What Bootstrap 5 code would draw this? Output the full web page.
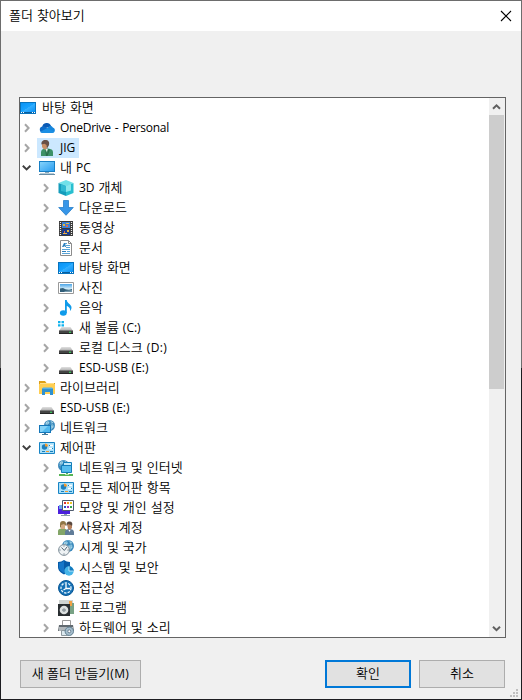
<!DOCTYPE html>
<html lang="ko">
<head>
<meta charset="utf-8">
<meta name="viewport" content="width=device-width, initial-scale=1">
<title>폴더 찾아보기</title>
<link href="https://cdn.jsdelivr.net/npm/bootstrap@5.3.0/dist/css/bootstrap.min.css" rel="stylesheet">
<style>
body{background:#f0f0f0;color:#000;font:350 13px/20px "Open Sans","Noto Sans CJK KR",sans-serif;word-spacing:.6px;overflow:hidden}
.dialog{width:522px;height:700px;background:#f0f0f0;border:1px solid;border-image:linear-gradient(#6d6d6d 0 368px,#1c1c20 368px) 1}
.titlebar{height:30px;padding:0 9px 0 8px}
.titlebar span{padding-bottom:2px}
.close-x{width:12px;height:12px}
.tree-box{height:541px;margin:66px 15px 0 18px;border:1px solid #646464;background:#fff}
.tree-row{height:20px;white-space:nowrap}
.ico{width:16px;height:16px;flex:none}
.lv2{padding-left:19px}
.exp{width:15px;height:16px;flex:none;margin-right:4px}
.lbl{padding-left:5px;height:20px;line-height:18px}
.lbl.en{line-height:20px}
.lv0 .lbl{padding-left:6px}
.en{font-size:12px;font-weight:400}
.tight{letter-spacing:-.25px;word-spacing:1px}
.loose{letter-spacing:.35px}
.picked{background:#cce8ff;margin-left:-2px;padding:0 4px 0 2px}
.scroll-bar{width:16px;background:#f0f0f0;padding-right:1px}
.scroll-bar svg{width:15px;height:17px}
.thumb{height:274px;background:#cdcdcd}
.foot{padding:22px 16px 0 19px}
.dlg-btn{height:28px;border:1px solid #adadad;border-radius:0;background:#e1e1e1;color:#000;font-size:13px;font-weight:350;line-height:24px;padding:0 0 2px;width:86px}
.dlg-btn.wide{width:121px}
.dlg-btn.default{border:2px solid #0078d7;line-height:22px}
.grip{width:8px;height:8px;right:3px;bottom:2px}
</style>
</head>
<body>
<svg class="position-absolute" width="0" height="0" aria-hidden="true">
<defs>
<linearGradient id="gBlue" x2="1" y2="1"><stop stop-color="#0a93f5"/><stop offset=".5" stop-color="#18a3ff"/><stop offset=".52" stop-color="#35b0ff"/><stop offset="1" stop-color="#0b90f5"/></linearGradient>
<linearGradient id="gPc" x2="1" y2="1"><stop stop-color="#86d3fb"/><stop offset="1" stop-color="#2a9df0"/></linearGradient>
<linearGradient id="gSky" x2="0" y2="1"><stop stop-color="#4aa5e8"/><stop offset=".6" stop-color="#d3ecf8"/><stop offset="1" stop-color="#3f7277"/></linearGradient>
<linearGradient id="gDisk" x2="0" y2="1"><stop stop-color="#e0e0e0"/><stop offset="1" stop-color="#aaa"/></linearGradient>
<symbol id="right" viewBox="0 0 15 16"><path d="M5 4.200 8.600 8 5 11.800" fill="none" stroke="#a6a6a6" stroke-width="2"/></symbol>
<symbol id="down" viewBox="0 0 15 16"><path d="M2.800 5.700 6.600 9.400 10.400 5.700" fill="none" stroke="#404040" stroke-width="1.900"/></symbol>
<symbol id="desktop" viewBox="0 0 16 16"><path fill="#0873bd" d="M0 2h16v12H0z"/><path fill="url(#gBlue)" d="M1 3h14v9H1z"/><path fill="#075d9d" d="M1 12h14v1H1z"/><path stroke="#fff" d="M1 12.500h1M3 12.500h1M12 12.500h1M14 12.500h1"/></symbol>
<symbol id="cloud" viewBox="0 0 16 16"><path fill="#0a5ab5" d="M3.300 7.200A4.500 4.500 0 0 1 12 5.800c0 1.800-8.700 3-8.700 1.400z"/><path fill="#0f6cc8" d="M3.200 6.500c2-.7 4.100 1 8.800 4L4 12.800A3.200 3.200 0 0 1 3.200 6.500z"/><path fill="#1686dc" d="M8.500 8C10 5.200 13.200 5.500 13.800 7.500 16 8 16.500 11 15 12.200L8.500 10z"/><path fill="#1b8fe4" d="m8.200 8 7.300 3.800c-.5.800-1.200 1.200-2 1.200H3.700c-1 0-1.900-.4-2.600-1.100z"/></symbol>
<symbol id="person" viewBox="0 0 16 16"><path fill="#3d9168" d="M2 16v-4C2.200 9.600 4 9 6 8.500h3c3.200.4 4.800 1.200 5 3.500v4z"/><path fill="#2c6c4d" d="m6 9 2 5 1.500-5 1.500.5L8.500 16H7z"/><path fill="#eee" d="m6.500 9 1.300 3 1-3z"/><path fill="#c99068" d="M3 3h5v3.500c0 2-.8 3-2 3s-3-1.500-3-3z"/><path fill="#685047" d="M2.500 4.500C2 1.500 4 0 6 0c3.500 0 5 2 3.800 5.500L8 8.500 7.500 5l-2-1.200z"/></symbol>
<symbol id="pc" viewBox="0 0 16 16"><path fill="#177fc5" d="M0 1h16v11H0z"/><path fill="url(#gPc)" d="M1 2h14v9H1z"/><path fill="#86a8bd" d="M6 12h4v2H6z"/><path fill="#688da5" d="M0 14h16v1H0z"/><path fill="#b8ccd7" d="M1 13h14v1H1z"/></symbol>
<symbol id="cube" viewBox="0 0 16 16"><path fill="#70e1e9" d="m8 0 7.500 3L8 6 .5 3z"/><path fill="#159cbb" d="m.5 3 7.500 3v10L.5 13z"/><path fill="#28bfd0" d="m8 6 7.500-3v10L8 16z"/><path fill="#8be8ee" d="m8 6 5-2v6.500L8 12z"/><path fill="#2fb9d2" d="m3 4 5 2v6l-5-1z"/></symbol>
<symbol id="download" viewBox="0 0 16 16"><path fill="#3796e8" stroke="#1875c4" stroke-width=".7" d="M5.500.5h5v7h4.800L8 15.300.7 7.500h4.800z"/></symbol>
<symbol id="film" viewBox="0 0 16 16"><path fill="#3b3b3b" d="M1 1h14v15H1z"/><path stroke="#eee" stroke-dasharray="1 1" stroke-width="1.200" d="M2.500 2v14M13.500 2v14"/><path fill="#3a7ed6" d="M4 2h8v6H4z"/><path fill="#193d91" d="M4 9h8v6H4z"/><path fill="#e8b63d" d="M5 4h2v2H5zM8 3h3v1H8zM5 13h4v1H5zM9 10h2v2H9z"/><path fill="#d76a55" d="M8 5h2v2H8zM6 11h1v2H6z"/></symbol>
<symbol id="doc" viewBox="0 0 16 16"><path fill="#fff" stroke="#8c8c8c" d="M2.500.5h8l3 3v12h-11z"/><path fill="none" stroke="#8c8c8c" d="M10.500.5v3h3"/><path stroke="#5aa5d8" d="M6 3.500h3M8 5.500h4M8 7.500h4M4 9.500h8M9 11.500h3M4 13.500h8"/><path fill="#2c7fbd" d="M4 7 6 3h1l1 4H7l-.5-1L5.500 7zM4 11h4v1H4z"/></symbol>
<symbol id="photo" viewBox="0 0 16 16"><path fill="#fff" stroke="#999" d="M.5 2.500h15v11H.5z"/><path fill="url(#gSky)" d="M2 4h12v8H2z"/><path fill="#315e78" d="M2 8.500 5 8l3 1.500 3 .5 3-1v3H2z"/><path fill="#7599ac" d="m7 11 7-1v2H6z"/></symbol>
<symbol id="music" viewBox="0 0 16 16"><ellipse cx="5.300" cy="13" rx="3.400" ry="2.700" fill="#109bea"/><path fill="#109bea" d="M7 0h1.800c0 3.300 4.700 4.200 4.700 7.500 0 1.300-.5 2.500-1.500 3.500.5-3-1.200-4.200-3.200-5v7H7z"/></symbol>
<symbol id="disk" viewBox="0 0 16 16"><path fill="url(#gDisk)" d="M3.500 6h9L15 10H1z"/><path fill="#444" d="M1 9.500h14V13H1z"/><path fill="#252525" d="M1 12h14v1H1z"/><path fill="#3bed65" d="M11 10.800h2v1h-2z"/></symbol>
<symbol id="sysdisk" viewBox="0 0 16 16"><use href="#disk" y="1" width="16" height="16"/><path fill="#fff" d="M0 0h7v7H0z"/><path fill="#12b4ee" d="M0 1h2.500v2.300H0zM3.500 1H6v2.300H3.500zM0 4.300h2.500v2.200H0zM3.500 4.300H6v2.200H3.500z"/></symbol>
<symbol id="library" viewBox="0 0 16 16"><path fill="#dda018" d="M0 1h6l1.500 2H16v4H0z"/><path fill="#ffce52" d="M0 4h16v10H0z"/><path fill="#ffdf87" d="M1 3h14v1H1z"/><path fill="#2f91d0" d="M3 8.500h11V15h-3v-3H6v3H3z"/><path fill="#53b0e8" d="M4 7.500h9L14 9H3z"/></symbol>
<symbol id="globe" viewBox="0 0 16 16"><circle cx="8" cy="8" r="8" fill="#3b88bb"/><path fill="#a8d4e7" d="m3 3 3-1.500L8 4 5 7 2 6zM8 8l5-2 1 4-4 4-2-3zM10 1l4 3-3 1z"/><path fill="none" stroke="#68aed1" d="M1 8h14M8 0C3 5 3 11 8 16M8 0c5 5 5 11 0 16"/></symbol>
<symbol id="network" viewBox="0 0 16 16"><use href="#globe" x="5" y="0" width="11" height="11"/><path fill="#1476b9" d="M0 5h12v8H0z"/><path fill="#50b9ef" d="M1 6h10v6H1z"/><path fill="#84d2f7" d="M1 6h8l-6 6H1z"/><path fill="#437b9c" d="M5 13h2v1h2v1H3v-1h2z"/></symbol>
<symbol id="control" viewBox="0 0 16 16"><path fill="#a9dff8" stroke="#1784c5" d="M.5 2.500h15v11H.5z"/><circle cx="5.500" cy="7" r="2.700" fill="#1d80be"/><path fill="#f39a2d" d="M6 6.500v-3a3 3 0 0 1 3 3zM7 11h3v1H7z"/><path stroke="#fff" stroke-width="1.500" d="M10 5.500h4M10 8.500h4"/><path stroke="#187fbd" d="M10 5.500h1M13 8.500h1M3 11.500h3M11 11.500h3"/></symbol>
<symbol id="internet" viewBox="0 0 16 16"><use href="#globe" width="11" height="11"/><path fill="#bfe8fa" stroke="#137eb8" d="M5.500 2.500h8v6h-8z"/><path fill="#56bdee" stroke="#147dba" d="M3.500 5.500h10v7h-10z"/><path fill="#55b554" d="M1 14h14v2H1zM8 13h2v2H8z"/><path fill="#b6dfb5" d="M7 14h4v1H7z"/></symbol>
<symbol id="looks" viewBox="0 0 16 16"><path fill="#4b20dc" d="M0 6h12v8H0z"/><path fill="#69a7eb" d="M1 5h5v4H1z"/><path fill="#fff" stroke="#505c6e" d="M4.500.5h11v10h-11z"/><path fill="#d33" d="M6 2h2v2H6z"/><path fill="#ff9b22" d="M9 2h2v2H9z"/><path fill="#ecc82a" d="M12 2h2v2h-2z"/><path fill="#2754c9" d="M6 6h2v2H6z"/><path fill="#9b33b7" d="M9 6h2v2H9z"/><path fill="#35a653" d="M12 6h2v2h-2z"/><path fill="#8a9baa" d="M6 14h3v1h3v1H3v-1h3z"/></symbol>
<symbol id="users" viewBox="0 0 16 16"><path fill="#83a568" d="M0 15v-4c0-2 2-2.500 5-2.500s4 1 4 3V15z"/><path fill="#d4ab83" d="M3 4h4v5H3z"/><path fill="#8f7544" d="M2 7V4c0-2 1-3 3-3s3 1 3 3v2L6 4 3 5v3z"/><path fill="#607c98" d="M7 15v-3c0-2 2-3 4.500-3s4.500 1 4.500 3v3z"/><path fill="#b37f5c" d="M9 4h5v4l-2 2-2-1z"/><path fill="#58483e" d="M8.500 6C8 3 9 1.500 11.500 1.500S15 3 14 6l-1-1-3-1z"/><path fill="#fff" d="m10.500 10 1 2 1-2z"/></symbol>
<symbol id="clock" viewBox="0 0 16 16"><use href="#globe" x="4" width="12" height="12"/><circle cx="6" cy="10" r="5.400" fill="#eef2f4" stroke="#81909a"/><path fill="none" stroke="#526573" d="m3.500 7.500 2.800 3L9 7M6 5.500v1M6 13.500v1M1.500 10h1M9.500 10h1"/></symbol>
<symbol id="shield" viewBox="0 0 16 16"><path fill="#075ba8" d="M0 2c2.500 0 4.200-.8 6-2 1.800 1.200 3.500 2 6 2v5c0 3.500-2.500 5.500-6 7.500C2.500 12.500 0 10.500 0 7z"/><path fill="#1676c8" d="M6 1v12C2.500 11 1 9.500 1 7V3c1.800 0 3.500-.8 5-2z"/><circle cx="11" cy="11" r="4.700" fill="#45b4e8"/><path fill="#147abd" d="M11 11V6.300A4.700 4.700 0 0 1 15.700 11z"/><path fill="none" stroke="#d3f3ff" stroke-width=".8" d="M11 6.500V11h4.500"/></symbol>
<symbol id="access" viewBox="0 0 16 16"><circle cx="8" cy="8" r="7.500" fill="#1470b5" stroke="#0a5795"/><circle cx="8" cy="8" r="5" fill="none" stroke="#e9f7ff" stroke-width="1.300" stroke-dasharray="2.400 1.200"/><path fill="none" stroke="#fff" stroke-width="1.300" d="M8 4v4.500h4M8 8.500 5.500 10"/></symbol>
<symbol id="program" viewBox="0 0 16 16"><path fill="#cfd4d2" d="M1 0h14v14H1z"/><path fill="#78a284" d="M12 3h4v11h-4z"/><path fill="#f0a145" d="M11 1h3v5h-3z"/><path fill="#292e31" d="M0 4h12v12H0z"/><circle cx="6" cy="10" r="4.300" fill="#dce0e0"/><circle cx="6" cy="10" r="1.600" fill="#56646c"/><circle cx="6" cy="10" r=".7" fill="#fff"/></symbol>
<symbol id="hardware" viewBox="0 0 16 16"><path fill="#fff" stroke="#9a9a9a" d="M4.500.5h8v6h-8z"/><path fill="#626a70" d="M1 5h14l1 6H0z"/><path fill="#b1b7bb" d="M1 7h14v4H1z"/><path fill="#dce9ef" stroke="#8e999f" d="M3.500 10.500h6v5h-6z"/><circle cx="11.300" cy="11.300" r="4.200" fill="#a5bdcc" stroke="#617f92"/><circle cx="11.300" cy="11.300" r="1.500" fill="#fff" stroke="#687f91"/></symbol>
</defs>
</svg>

<main class="dialog position-relative">
<header class="titlebar bg-white d-flex align-items-center justify-content-between"><span>폴더 찾아보기</span>
<svg class="close-x" viewBox="0 0 12 12" role="img" aria-label="닫기"><path d="m1 1 10 10M11 1 1 11" stroke="#000" stroke-width="1.100"/></svg></header>
<section class="tree-box d-flex">
<div class="flex-grow-1 overflow-hidden" role="tree">
<div class="tree-row lv0 d-flex align-items-center"><svg class="ico"><use href="#desktop"/></svg><span class="lbl">바탕 화면</span></div>
<div class="tree-row lv1 d-flex align-items-center"><svg class="exp"><use href="#right"/></svg><svg class="ico"><use href="#cloud"/></svg><span class="lbl en tight">OneDrive - Personal</span></div>
<div class="tree-row lv1 d-flex align-items-center"><svg class="exp"><use href="#right"/></svg><span class="picked d-flex align-items-center"><svg class="ico"><use href="#person"/></svg><span class="lbl en">JIG</span></span></div>
<div class="tree-row lv1 d-flex align-items-center"><svg class="exp"><use href="#down"/></svg><svg class="ico"><use href="#pc"/></svg><span class="lbl">내 <span class="en">PC</span></span></div>
<div class="tree-row lv2 d-flex align-items-center"><svg class="exp"><use href="#right"/></svg><svg class="ico"><use href="#cube"/></svg><span class="lbl"><span class="en">3D</span> 개체</span></div>
<div class="tree-row lv2 d-flex align-items-center"><svg class="exp"><use href="#right"/></svg><svg class="ico"><use href="#download"/></svg><span class="lbl">다운로드</span></div>
<div class="tree-row lv2 d-flex align-items-center"><svg class="exp"><use href="#right"/></svg><svg class="ico"><use href="#film"/></svg><span class="lbl">동영상</span></div>
<div class="tree-row lv2 d-flex align-items-center"><svg class="exp"><use href="#right"/></svg><svg class="ico"><use href="#doc"/></svg><span class="lbl">문서</span></div>
<div class="tree-row lv2 d-flex align-items-center"><svg class="exp"><use href="#right"/></svg><svg class="ico"><use href="#desktop"/></svg><span class="lbl">바탕 화면</span></div>
<div class="tree-row lv2 d-flex align-items-center"><svg class="exp"><use href="#right"/></svg><svg class="ico"><use href="#photo"/></svg><span class="lbl">사진</span></div>
<div class="tree-row lv2 d-flex align-items-center"><svg class="exp"><use href="#right"/></svg><svg class="ico"><use href="#music"/></svg><span class="lbl">음악</span></div>
<div class="tree-row lv2 d-flex align-items-center"><svg class="exp"><use href="#right"/></svg><svg class="ico"><use href="#sysdisk"/></svg><span class="lbl">새 볼륨 <span class="en">(C:)</span></span></div>
<div class="tree-row lv2 d-flex align-items-center"><svg class="exp"><use href="#right"/></svg><svg class="ico overflow-visible"><use href="#disk" y="1" width="16" height="16"/></svg><span class="lbl">로컬 디스크 <span class="en loose">(D:)</span></span></div>
<div class="tree-row lv2 d-flex align-items-center"><svg class="exp"><use href="#right"/></svg><svg class="ico overflow-visible"><use href="#disk" y="1" width="16" height="16"/></svg><span class="lbl en">ESD-USB (E:)</span></div>
<div class="tree-row lv1 d-flex align-items-center"><svg class="exp"><use href="#right"/></svg><svg class="ico"><use href="#library"/></svg><span class="lbl">라이브러리</span></div>
<div class="tree-row lv1 d-flex align-items-center"><svg class="exp"><use href="#right"/></svg><svg class="ico overflow-visible"><use href="#disk" y="1" width="16" height="16"/></svg><span class="lbl en">ESD-USB (E:)</span></div>
<div class="tree-row lv1 d-flex align-items-center"><svg class="exp"><use href="#right"/></svg><svg class="ico"><use href="#network"/></svg><span class="lbl">네트워크</span></div>
<div class="tree-row lv1 d-flex align-items-center"><svg class="exp"><use href="#down"/></svg><svg class="ico"><use href="#control"/></svg><span class="lbl">제어판</span></div>
<div class="tree-row lv2 d-flex align-items-center"><svg class="exp"><use href="#right"/></svg><svg class="ico"><use href="#internet"/></svg><span class="lbl">네트워크 및 인터넷</span></div>
<div class="tree-row lv2 d-flex align-items-center"><svg class="exp"><use href="#right"/></svg><svg class="ico"><use href="#control"/></svg><span class="lbl">모든 제어판 항목</span></div>
<div class="tree-row lv2 d-flex align-items-center"><svg class="exp"><use href="#right"/></svg><svg class="ico"><use href="#looks"/></svg><span class="lbl">모양 및 개인 설정</span></div>
<div class="tree-row lv2 d-flex align-items-center"><svg class="exp"><use href="#right"/></svg><svg class="ico"><use href="#users"/></svg><span class="lbl">사용자 계정</span></div>
<div class="tree-row lv2 d-flex align-items-center"><svg class="exp"><use href="#right"/></svg><svg class="ico"><use href="#clock"/></svg><span class="lbl">시계 및 국가</span></div>
<div class="tree-row lv2 d-flex align-items-center"><svg class="exp"><use href="#right"/></svg><svg class="ico"><use href="#shield"/></svg><span class="lbl">시스템 및 보안</span></div>
<div class="tree-row lv2 d-flex align-items-center"><svg class="exp"><use href="#right"/></svg><svg class="ico"><use href="#access"/></svg><span class="lbl">접근성</span></div>
<div class="tree-row lv2 d-flex align-items-center"><svg class="exp"><use href="#right"/></svg><svg class="ico"><use href="#program"/></svg><span class="lbl">프로그램</span></div>
<div class="tree-row lv2 d-flex align-items-center"><svg class="exp"><use href="#right"/></svg><svg class="ico"><use href="#hardware"/></svg><span class="lbl">하드웨어 및 소리</span></div>
</div>
<div class="scroll-bar d-flex flex-column"><svg viewBox="0 0 15 17"><path d="M4 10.800 7.500 7.300 11 10.800" fill="none" stroke="#606060" stroke-width="2"/></svg><div class="thumb"></div><svg class="mt-auto" viewBox="0 0 15 17"><path d="M4 6.700 7.500 10.200 11 6.700" fill="none" stroke="#606060" stroke-width="2"/></svg></div>
</section>
<footer class="foot d-flex gap-2"><button class="btn dlg-btn wide me-auto">새 폴더 만들기<span class="en loose">(M)</span></button><button class="btn dlg-btn default">확인</button><button class="btn dlg-btn">취소</button></footer>
<svg class="grip position-absolute" viewBox="0 0 8 8" aria-hidden="true"><path fill="#bfbfbf" d="M6 0h2v2H6zM3 3h2v2H3zM6 3h2v2H6zM0 6h2v2H0zM3 6h2v2H3zM6 6h2v2H6z"/></svg>
</main>
<script src="https://cdn.jsdelivr.net/npm/bootstrap@5.3.0/dist/js/bootstrap.bundle.min.js"></script>
</body>
</html>
